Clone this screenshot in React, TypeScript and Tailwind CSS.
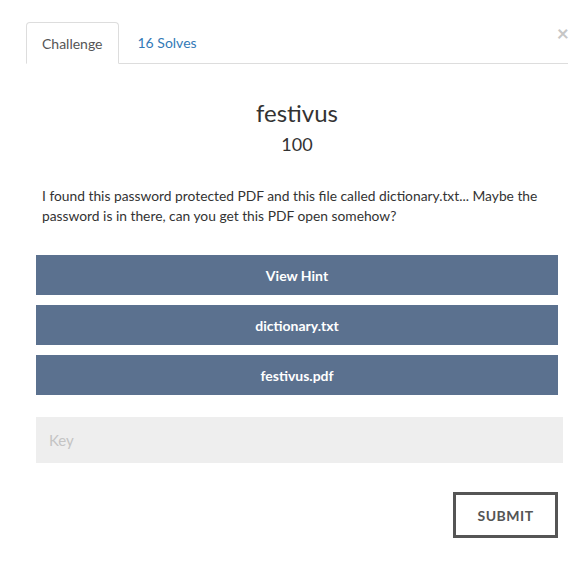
export default function App() {
  const files = ["View Hint", "dictionary.txt", "festivus.pdf"];

  return (
    <div className="relative h-[567px] w-[586px] bg-white font-['Lato','Liberation_Sans',sans-serif] text-[#333]">
      <button className="absolute right-[17px] top-[20px] text-[21px] font-bold leading-[26px] text-[#c6c6c6]">
        ×
      </button>

      <div className="pl-[26px] pr-[18px] pt-[22px]">
        <ul className="flex border-b border-[#ddd] text-[14px] leading-[20px]">
          <li className="-mb-px rounded-t border border-[#ddd] border-b-white bg-white px-[15px] pb-[9px] pt-[11px] text-[#555]">
            Challenge
          </li>
          <li className="ml-[2px] px-[17px] pb-[9px] pt-[11px] text-[#337ab7]">
            16 Solves
          </li>
        </ul>
      </div>

      <div className="pl-[36px] pr-[28px]">
        <h3 className="mt-[36px] text-center text-[24px] leading-[26px]">festivus</h3>
        <h4 className="mt-[8px] text-center text-[18px] leading-[20px]">100</h4>

        <p className="mt-[32px] pl-[6px] text-[13.8px] leading-[20px]">
          I found this password protected PDF and this file called dictionary.txt... Maybe the
          password is in there, can you get this PDF open somehow?
        </p>

        <div className="mt-[29px] flex flex-col gap-[10px]">
          {files.map((f) => (
            <button
              key={f}
              className="h-[40px] w-full bg-[#5b718f] text-[14px] font-bold text-white"
            >
              {f}
            </button>
          ))}
        </div>

        <input
          placeholder="Key"
          className="mt-[22px] h-[46px] w-[527px] bg-[#eeeeee] px-[13px] text-[15px] text-[#555] outline-none placeholder:text-[#c4c4c4]"
        />

        <div className="mt-[29px] flex justify-end">
          <button className="h-[46px] w-[105px] border-[3px] border-[#555] text-[14px] font-bold tracking-[0.5px] text-[#555]">
            SUBMIT
          </button>
        </div>
      </div>
    </div>
  );
}
